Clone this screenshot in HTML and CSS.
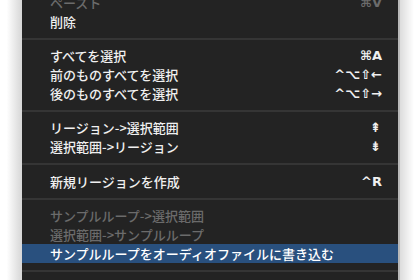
FILE: index.html
```html
<!DOCTYPE html>
<html lang="ja">
<head>
    <meta charset="UTF-8">
    <meta name="viewport" content="width=device-width, initial-scale=1.0">
    <title>編集メニュー</title>
    <link rel="stylesheet" href="styles.css">
</head>
<body>
    <div class="screen">
        <div class="shade-left"></div>
        <div class="menu">
            <ul class="items">
                <li class="item disabled"><span>ペースト</span><span class="key">⌘V</span></li>
                <li class="item"><span>削除</span></li>
                <li class="separator"></li>
                <li class="item"><span>すべてを選択</span><span class="key">⌘A</span></li>
                <li class="item"><span>前のものすべてを選択</span><span class="key">^⌥⇧←</span></li>
                <li class="item"><span>後のものすべてを選択</span><span class="key">^⌥⇧→</span></li>
                <li class="separator"></li>
                <li class="item"><span>リージョン-&gt;選択範囲</span><span class="key small">⇞</span></li>
                <li class="item"><span>選択範囲-&gt;リージョン</span><span class="key small">⇟</span></li>
                <li class="separator tall"></li>
                <li class="item"><span>新規リージョンを作成</span><span class="key">^R</span></li>
                <li class="separator"></li>
                <li class="item disabled"><span>サンプルループ-&gt;選択範囲</span></li>
                <li class="item disabled"><span>選択範囲-&gt;サンプルループ</span></li>
                <li class="item selected"><span>サンプルループをオーディオファイルに書き込む</span></li>
                <li class="separator"></li>
            </ul>
        </div>
        <div class="shade-right"></div>
    </div>
</body>
</html>
```
FILE: styles.css
```css
* {
    box-sizing: border-box;
}

body {
    margin: 0;
    padding: 0;
    background: #fff;
    font-family: "Noto Sans CJK JP", "DejaVu Sans", sans-serif;
}

.screen {
    display: flex;
    width: 420px;
    height: 280px;
    overflow: hidden;
}

.shade-left {
    width: 22px;
    background: linear-gradient(to right, #ffffff 30%, #d6d6d6);
}

.shade-right {
    width: 22px;
    border-left: 2px solid #b9b9b9;
    background: linear-gradient(to right, #dcdcdc, #ffffff 70%);
}

.menu {
    width: 376px;
    height: 280px;
    background: #232323;
    overflow: hidden;
}

.items {
    list-style: none;
    margin: -7px 0 0;
    padding: 0;
}

.item {
    display: flex;
    justify-content: space-between;
    align-items: center;
    height: 19px;
    padding: 0 16px 0 28px;
    color: #f0f0f0;
    font-size: 13px;
    font-weight: 500;
    line-height: 19px;
}

.item.disabled {
    color: #6b6b6b;
}

.item.selected {
    background: #29507e;
    color: #fff;
}

.key {
    font-family: "DejaVu Sans", sans-serif;
    font-size: 13px;
    font-weight: bold;
}

.key.small {
    padding-right: 1px;
}

.separator {
    height: 15px;
    display: flex;
    align-items: center;
}

.separator.tall {
    height: 16px;
}

.separator::after {
    content: "";
    display: block;
    width: 100%;
    height: 2px;
    background: #353535;
}
```
